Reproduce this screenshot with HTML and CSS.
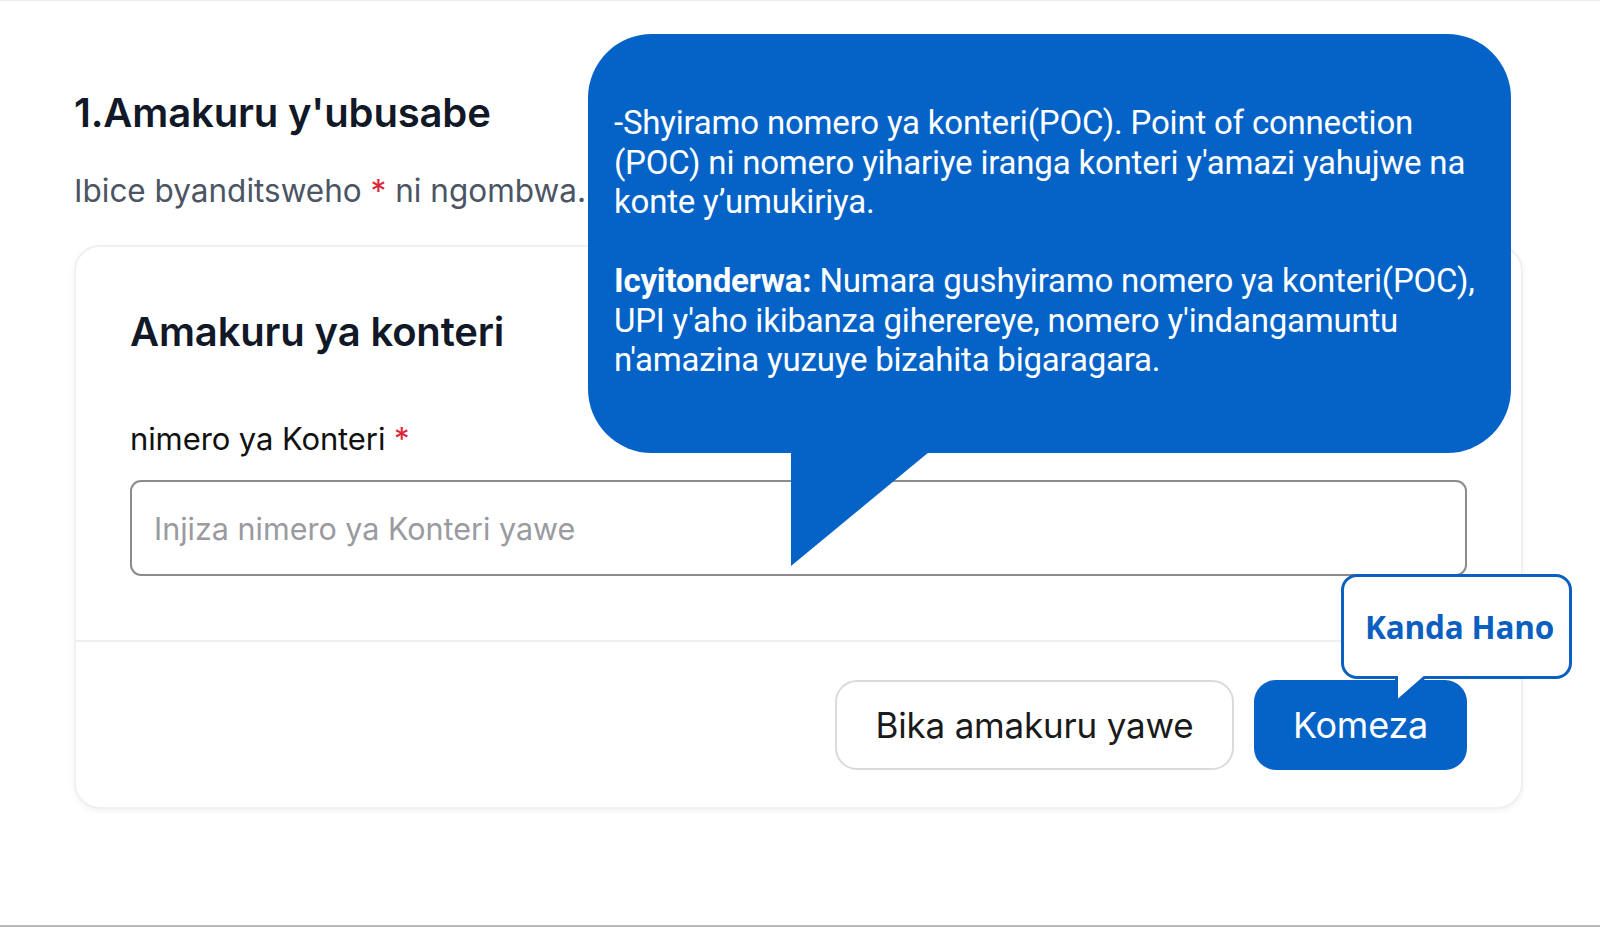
FILE: index.html
```html
<!DOCTYPE html>
<html lang="rw">
<head>
<meta charset="utf-8">
<title>Amakuru y'ubusabe</title>
<link rel="stylesheet" href="styles.css">
</head>
<body>
<main class="page">
  <h1 class="title">1.Amakuru y'ubusabe</h1>
  <p class="subtitle">Ibice byanditsweho <span class="req">*</span> ni ngombwa.</p>

  <section class="card">
    <div class="card-body">
      <h2 class="card-title">Amakuru ya konteri</h2>
      <label class="field-label" for="poc">nimero ya Konteri <span class="req">*</span></label>
      <input class="field-input" id="poc" type="text" placeholder="Injiza nimero ya Konteri yawe">
    </div>
    <div class="card-footer">
      <button class="btn btn-outline" type="button">Bika amakuru yawe</button>
      <button class="btn btn-primary" type="button">Komeza</button>
    </div>
  </section>

  <div class="callout">
    <p>-Shyiramo nomero ya konteri(POC). Point of connection (POC) ni nomero yihariye iranga konteri y'amazi yahujwe na konte y’umukiriya.</p>
    <p><strong>Icyitonderwa:</strong> Numara gushyiramo nomero ya konteri(POC), UPI y'aho ikibanza giherereye, nomero y'indangamuntu n'amazina yuzuye bizahita bigaragara.</p>
    <svg class="callout-tail" width="138" height="114" viewBox="0 0 138 114"><polygon points="0,0 138,0 0,114" fill="#0563c8"/></svg>
  </div>

  <div class="hint">
    <span class="hint-text">Kanda Hano</span>
    <svg class="hint-tail" width="36" height="30" viewBox="0 0 36 30"><polygon points="1.5,0 1.5,26 31,0" fill="#fff"/><polyline points="1.5,0 1.5,26 31,0" fill="none" stroke="#0a5fc0" stroke-width="3" stroke-linejoin="miter"/></svg>
  </div>
</main>
</body>
</html>
```

FILE: styles.css
```css
* { box-sizing: border-box; }

html, body {
  margin: 0;
  padding: 0;
  background: #ffffff;
}

body {
  font-family: Inter, "Noto Sans", sans-serif;
  color: #101828;
  width: 1600px;
  height: 927px;
  overflow: hidden;
  border-top: 1px solid #ececec;
  border-bottom: 2px solid #b8b8b8;
}

.page {
  position: relative;
  padding: 89px 78px 0 74px;
}

.title {
  margin: 0;
  font-size: 40px;
  line-height: 46px;
  font-weight: 600;
  letter-spacing: -0.15px;
  color: #111827;
}

.subtitle {
  margin: 37px 0 0;
  font-size: 31.5px;
  line-height: 36px;
  font-weight: 400;
  letter-spacing: 0;
  color: #4b5563;
}

.req { color: #e0243a; }

.card {
  margin-top: 36px;
  width: 1449px;
  border: 2px solid #f0f0f2;
  border-radius: 26px;
  background: #fff;
  box-shadow: 0 2px 6px rgba(16, 24, 40, 0.05);
}

.card-body {
  display: flex;
  flex-direction: column;
  align-items: flex-start;
  padding: 62px 54px 64px 54px;
  border-bottom: 2px solid #eeeeee;
}

.card-title {
  margin: 0;
  font-size: 40px;
  line-height: 46px;
  font-weight: 600;
  letter-spacing: -0.15px;
  color: #111827;
}

.field-label {
  margin-top: 66px;
  font-size: 31px;
  line-height: 36px;
  letter-spacing: -0.1px;
  color: #111111;
}

.field-input {
  margin-top: 23px;
  width: 100%;
  height: 96px;
  padding: 0 22px;
  border: 2px solid #8c8c8c;
  border-radius: 11px;
  font-family: Inter, "Noto Sans", sans-serif;
  font-size: 30.5px;
  letter-spacing: 0;
  color: #111;
  background: #fff;
  outline: none;
}

.field-input::placeholder { color: #9a9aa0; }

.card-footer {
  display: flex;
  justify-content: flex-end;
  gap: 20px;
  padding: 38px 54px 37px 54px;
}

.btn {
  height: 90px;
  border-radius: 22px;
  font-family: Inter, "Noto Sans", sans-serif;
  cursor: pointer;
}

.btn-outline {
  width: 399px;
  background: #fff;
  border: 2px solid #dadade;
  color: #1a1a1a;
  font-size: 35px;
  letter-spacing: -0.2px;
}

.btn-primary {
  width: 213px;
  background: #0563c8;
  border: none;
  color: #fff;
  font-size: 36px;
  letter-spacing: -0.2px;
}

/* Callout bubble overlays the form */
.callout {
  position: absolute;
  left: 588px;
  top: 33px;
  width: 923px;
  height: 419px;
  padding: 69px 21px 0 26px;
  background: #0563c8;
  border-radius: 64px;
  color: #fff;
  font-family: Roboto, "Noto Sans", sans-serif;
  font-size: 33px;
  line-height: 39.5px;
  letter-spacing: -0.2px;
}

.callout p { margin: 0 0 39.5px; }

.callout strong { font-weight: 700; }

.callout-tail {
  position: absolute;
  left: 203px;
  top: 418px;
  display: block;
}

.hint {
  position: absolute;
  left: 1341px;
  top: 573px;
  width: 231px;
  height: 105px;
  display: flex;
  align-items: center;
  justify-content: center;
  padding-left: 6px;
  background: #fff;
  border: 3px solid #0a5fc0;
  border-radius: 16px;
}

.hint-text {
  font-family: "Open Sans", "Noto Sans", sans-serif;
  font-weight: 700;
  font-size: 31.5px;
  color: #0a5fc0;
  letter-spacing: -0.2px;
}

.hint-tail {
  position: absolute;
  left: 51px;
  top: 99px;
  display: block;
}
```
